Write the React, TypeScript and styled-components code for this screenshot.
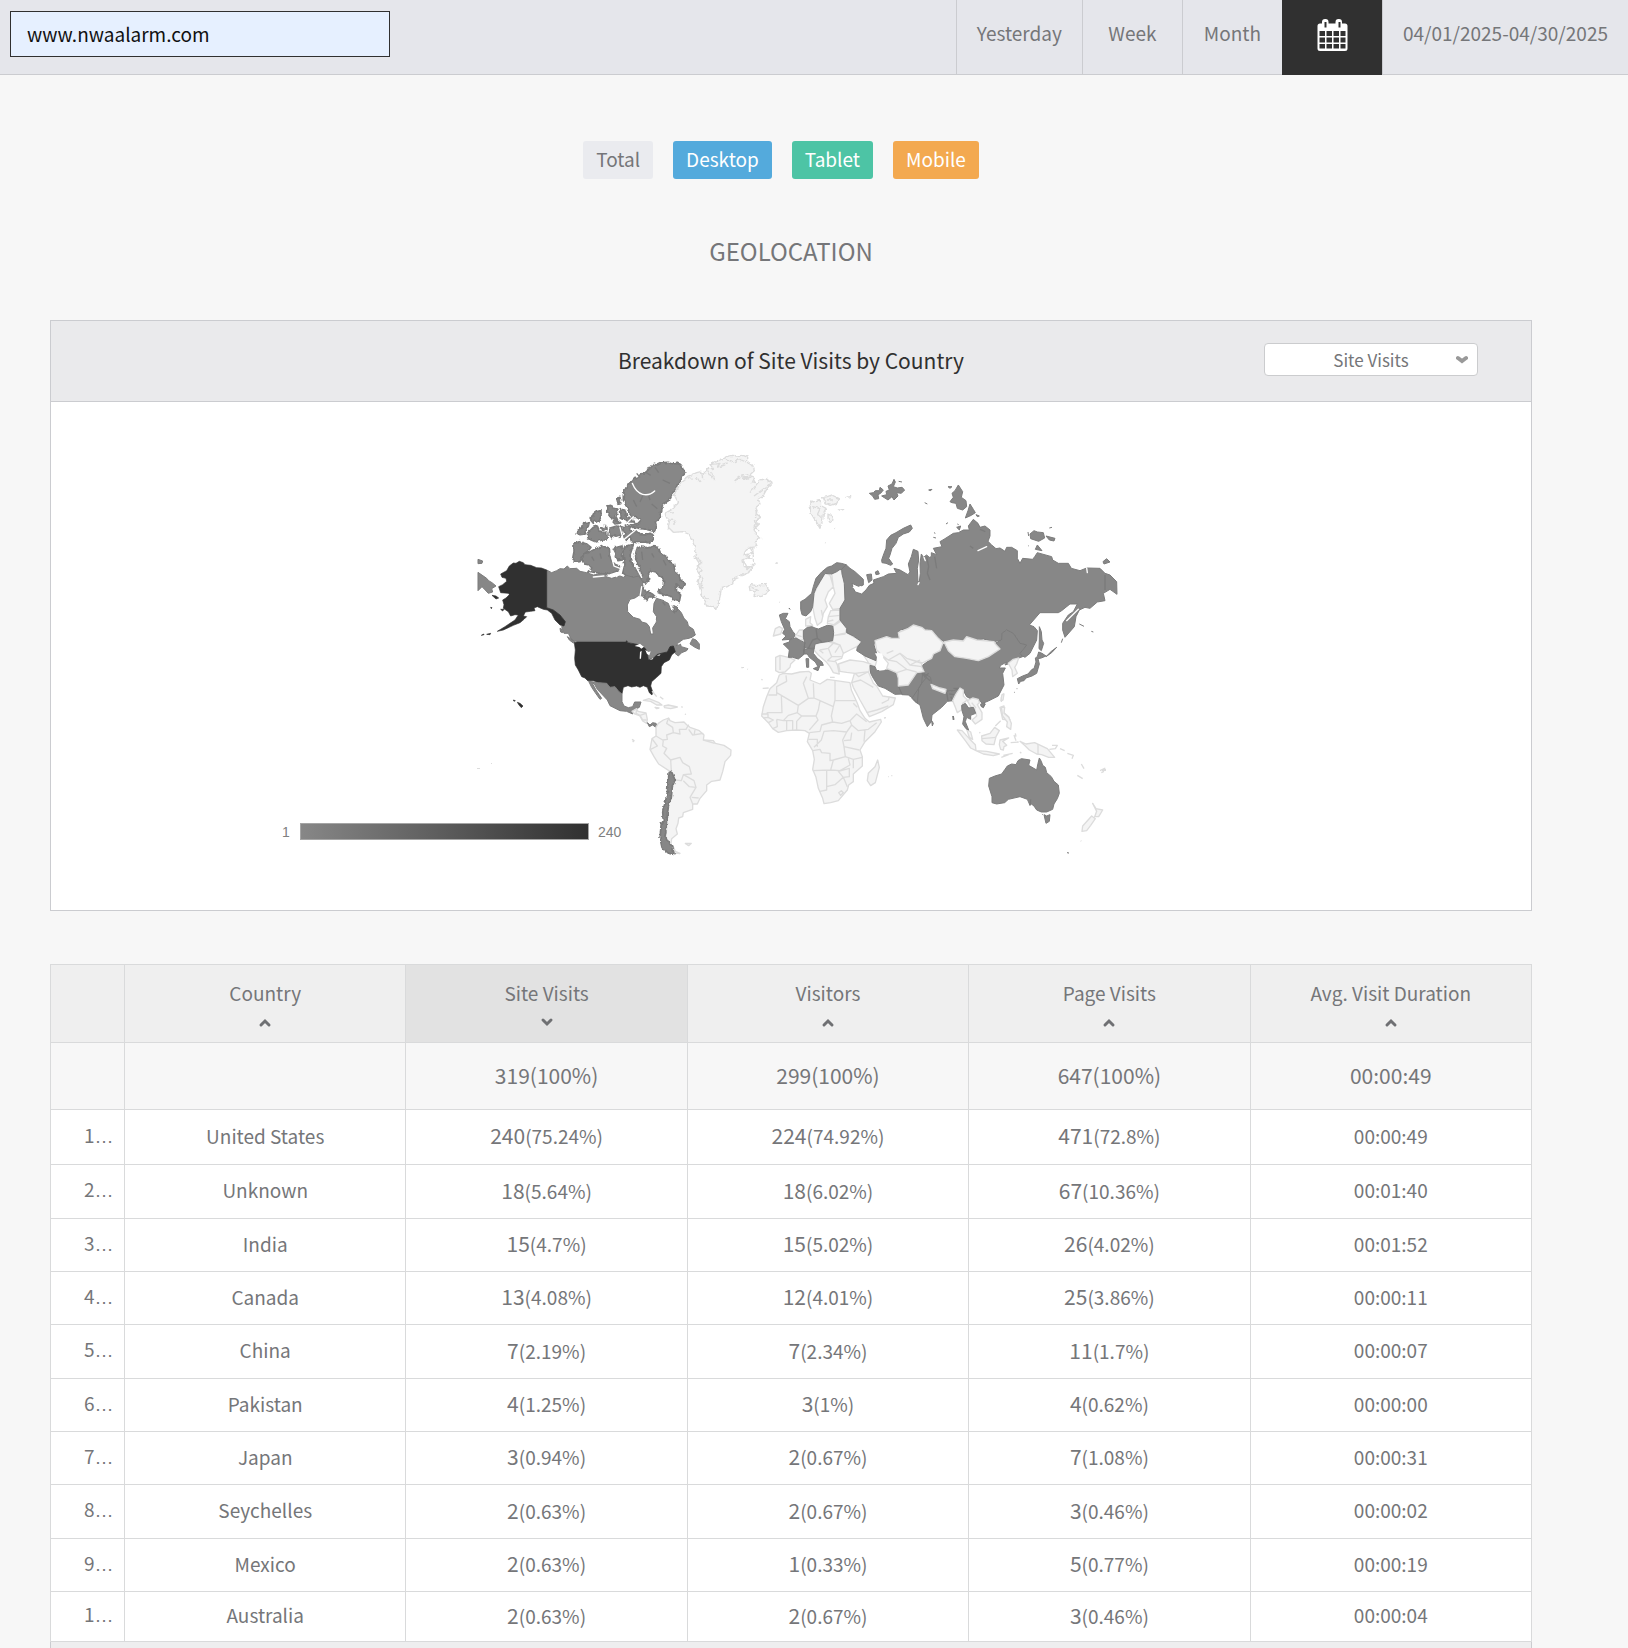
import React from 'react';
import styled, { createGlobalStyle } from 'styled-components';

const GlobalStyle = createGlobalStyle`
  *, *::before, *::after { box-sizing: border-box; }
  body {
    margin: 0;
    background: #f7f7f7;
    color: #757679;
    font-family: "Noto Sans CJK KR", "Noto Sans", sans-serif;
    font-size: 19px;
    line-height: 28px;
  }
  button, input, select { font: inherit; color: inherit; }
`;

const Page = styled.div`
  display: flex;
  flex-direction: column;
  min-height: 100vh;
`;

const TopBar = styled.header`
  display: flex;
  justify-content: space-between;
  height: 75px;
  background: #e5e6eb;
  border-bottom: 1px solid #cbccd0;
`;

const SiteInput = styled.input`
  width: 380px;
  height: 46px;
  margin: 11px 0 0 10px;
  padding: 0 16px 2px;
  border: 1px solid #303030;
  border-radius: 0;
  background: #e6f0ff;
  color: #111;
`;

const RangeNav = styled.nav`
  display: flex;
`;

const RangeButton = styled.button<{ $active?: boolean }>`
  display: flex;
  align-items: center;
  justify-content: center;
  min-width: 100px;
  height: 75px;
  padding: 0 20px ${p => (p.$active ? 6 : 9)}px;
  border: 0;
  border-left: 1px solid ${p => (p.$active ? '#303030' : '#cbccd0')};
  background: ${p => (p.$active ? '#303030' : 'transparent')};
  cursor: pointer;
`;

const Content = styled.main`
  display: flex;
  flex: 1;
  flex-direction: column;
  padding: 66px 96px 0 50px;
`;

const DeviceTabs = styled.div`
  display: flex;
  justify-content: center;
`;

const DeviceTab = styled.button<{ $bg: string; $fg: string }>`
  height: 38px;
  margin-right: 20px;
  padding: 0 13px 2px;
  border: 0;
  border-radius: 3px;
  background: ${p => p.$bg};
  color: ${p => p.$fg};
  cursor: pointer;
`;

const PageTitle = styled.h1`
  margin: 54px 0 51px;
  font-size: 24px;
  font-weight: 400;
  line-height: 36px;
  text-align: center;
`;

const Panel = styled.section`
  border: 1px solid #cbccd0;
  background: #fff;
`;

const PanelHeader = styled.div`
  display: grid;
  grid-template-columns: 1fr auto 1fr;
  align-items: center;
  height: 81px;
  padding-bottom: 3px;
  border-bottom: 1px solid #cbccd0;
  background: #eaeaec;
`;

const PanelTitle = styled.h2`
  grid-column: 2;
  margin: 0;
  color: #303030;
  font-size: 21px;
  font-weight: 400;
`;

const SelectBox = styled.div`
  position: relative;
  justify-self: end;
  width: 214px;
  margin-right: 53px;
`;

const MetricSelect = styled.select`
  display: block;
  width: 100%;
  height: 33px;
  padding: 0 20px;
  border: 1px solid #cbccce;
  border-radius: 4px;
  background: #fff;
  font-size: 17px;
  line-height: 24px;
  text-align: center;
  text-align-last: center;
  appearance: none;
`;

const SelectArrow = styled.svg`
  position: absolute;
  top: 12px;
  right: 10px;
  pointer-events: none;
`;

const MapSvg = styled.svg`
  display: block;
  width: 100%;
  height: 508px;
`;

const MapLabel = styled.text`
  fill: #808080;
  font-family: "Liberation Sans", Arial, sans-serif;
  font-size: 14px;
`;

const Visited = styled.path`
  fill: #878787;
  stroke: #7b7b7b;
  stroke-width: 3;
  stroke-linejoin: round;
`;

const ArcticIslands = styled(Visited)`
  stroke-width: 5;
`;

const TopCountry = styled.path`
  fill: #303030;
  stroke: #303030;
  stroke-width: 2;
  stroke-linejoin: round;
`;

const Unvisited = styled.path`
  fill: #f4f4f4;
  stroke: #dcdcdc;
  stroke-width: 4;
  stroke-linejoin: round;
`;

const Border = styled.path<{ $dark?: boolean }>`
  fill: none;
  stroke: ${p => (p.$dark ? '#7b7b7b' : '#dcdcdc')};
  stroke-width: 4;
  stroke-linejoin: round;
`;

const Water = styled.path`
  fill: #fff;
`;

const Channel = styled.path`
  fill: none;
  stroke: #fff;
  stroke-width: 4;
  stroke-linecap: round;
`;

const DataTable = styled.table`
  width: 100%;
  margin-top: 53px;
  border: 1px solid #d9dadb;
  border-width: 1px 0 0 1px;
  border-collapse: separate;
  border-spacing: 0;
  table-layout: fixed;
  background: #fff;
  text-align: center;

  th, td {
    padding: 0;
    border: 1px solid #d9dadb;
    border-width: 0 1px 1px 0;
    font-weight: 400;
  }

  td {
    padding-bottom: 3px;
  }
`;

const RankCol = styled.col`
  width: 74px;
`;

const HeadCell = styled.th<{ $sorted?: boolean }>`
  height: 78px;
  background: ${p => (p.$sorted ? '#e2e2e2' : '#efefef')};
`;

const SortButton = styled.button`
  display: flex;
  flex-direction: column;
  align-items: center;
  gap: 9px;
  width: 100%;
  height: 77px;
  padding: 14px 0 0;
  border: 0;
  background: transparent;
  cursor: pointer;
`;

const TotalRow = styled.tr`
  height: 67px;
  background: #f7f7f7;
  font-size: 21px;
`;

const DataRow = styled.tr`
  height: 53px;
  &:nth-child(3n) { height: 54px; }
  &:nth-child(2) { height: 55px; }
  &:last-child { height: 50px; }
`;

const RankCell = styled.td`
  && {
    padding-left: 33px;
    text-align: left;
  }
  overflow: hidden;
  white-space: nowrap;
`;

const Ellipsis = styled.span`
  font-family: "Liberation Sans", Arial, sans-serif;
`;

const Count = styled.span`
  font-size: 21px;
`;

const TableFooter = styled.div`
  flex: 1;
  min-height: 6px;
  border-left: 1px solid #cbccd0;
  border-right: 1px solid #cbccd0;
  background: #eeeeef;
`;

const CalendarIcon = () => (
  <svg width="31" height="32" viewBox="0 0 31 32" aria-hidden="true">
    <path
      fill="#fff"
      fillRule="evenodd"
      d="M3 4.500H5V3a3 3 0 0 1 3-3h.5a3 3 0 0 1 3 3v1.500h7V3a3 3 0 0 1 3-3h.5a3 3 0 0 1 3 3v1.500h3a2.500 2.500 0 0 1 2.500 2.500v22.500a2.500 2.500 0 0 1-2.500 2.500H3a2.500 2.500 0 0 1-2.500-2.500V7A2.500 2.500 0 0 1 3 4.500ZM7.500 3v5.500h2V3ZM21.500 3v5.500h2V3ZM2.500 12v5h5.500v-5ZM9.500 12v5H15v-5ZM16.500 12v5H22v-5ZM23.500 12v5h5v-5ZM2.500 18.500v5h5.500v-5ZM9.500 18.500v5H15v-5ZM16.500 18.500v5H22v-5ZM23.500 18.500v5h5v-5ZM2.500 25v4.500h5.500V25ZM9.500 25v4.500H15V25ZM16.500 25v4.500H22V25ZM23.500 25v4.500h5V25Z"
    />
  </svg>
);

const Caret = ({ down }: { down?: boolean }) => (
  <svg width="14" height="14" viewBox="0 0 14 14" aria-hidden="true">
    <path
      d={down ? 'M3 4l4 4 4-4' : 'M3 9l4-4 4 4'}
      fill="none"
      stroke="#6f7073"
      strokeWidth="3"
      strokeLinecap="round"
    />
  </svg>
);

const NorthAmerica = () => (
  <g transform="translate(460 440) scale(0.33333)">
    <ArcticIslands
      filter="url(#coast)"
      d="M515 122L525 112 532 113 540 105 550 98 556 100 562 88 570 86 580 73 592 75 606 68 625 67 640 72 652 70 660 74 664 72 668 86 677 98 668 108 660 125 652 134 645 150 634 163 625 182 612 190 606 200 605 215 598 218 604 230 592 240 586 245 590 262 583 274 560 268 545 266 525 262 512 262 512 255 535 250 542 240 530 232 517 232 508 220 502 205 496 190 490 180 490 165 494 150 500 142 505 135ZM488 265L500 255 512 262 512 272 530 275 540 284 555 285 570 280 580 283 579 300 565 308 545 306 530 308 515 305 510 290 498 304 490 290 495 280ZM470 175L480 172 482 188 474 190ZM442 198L452 196 458 204 470 207 474 222 466 226 472 238 452 232 444 222ZM481 206L495 212 500 230 516 236 524 246 510 254 498 242 484 236ZM448 265L470 258 486 264 485 276 480 292 468 284 455 293 448 282ZM382 280L400 262 412 258 418 272 430 278 440 276 442 300 425 300 408 306 385 296ZM352 280L358 266 368 262 372 248 388 246 385 258 375 272 376 282 360 284ZM392 240L400 222 410 215 423 212 423 228 417 246 405 240 400 250ZM425 262L435 254 438 266 428 272ZM456 242L472 240 482 248 465 252Z"
    />
    <ArcticIslands
      filter="url(#coast)"
      d="M342 310L360 305 380 312 393 322 384 334 370 342 360 365 348 366 338 356 342 335ZM363 352L385 338 400 330 430 318 448 326 450 348 454 362 466 374 478 378 478 390 462 396 450 400 430 402 410 398 386 394 395 380 384 374 372 372ZM460 325L485 318 490 335 484 345 488 360 474 362 466 350 468 340ZM495 318L520 314 515 330 510 345 514 370 530 385 538 400 542 418 520 414 500 412 488 400 495 372 490 350ZM525 330L545 318 560 324 580 320 594 322 602 340 620 350 626 362 640 370 645 395 658 405 660 418 676 432 668 448 655 440 648 432 650 452 662 465 658 485 640 480 634 470 615 465 600 460 592 458 600 446 612 438 614 424 606 412 592 402 588 396 570 392 564 404 566 420 556 432 544 420 545 400 538 380 530 365 526 350ZM548 438L560 455 575 460 588 472 570 470 560 482 550 468ZM640 498L652 502 652 514 640 516Z"
    />
    <Visited d="M260 390L275 398 290 392 300 386 312 387 322 378 330 386 350 385 360 394 380 398 400 405 430 400 438 410 455 415 480 408 490 412 500 406 520 412 536 408 548 425 548 445 560 460 552 468 535 467 525 474 510 478 502 495 503 515 520 532 540 538 545 546 560 550 568 560 572 582 580 582 578 564 588 548 590 530 580 515 582 490 590 475 606 478 615 485 625 490 632 510 645 520 655 508 664 518 672 535 682 545 685 558 700 568 706 585 692 594 670 598 655 608 648 618 660 608 664 620 684 626 680 632 665 638 655 648 645 640 640 618 630 620 622 636 612 638 592 643 580 655 565 660 562 640 558 628 530 613 504 606 498 604 350 604 335 600 325 580 312 580 305 560 316 545 300 525 280 510 260 503ZM690 612L698 596 708 600 718 612 718 628 705 622ZM322 590L332 596 346 606 340 609 328 600ZM300 565L306 568 308 578 302 576Z" />
    <Water
      filter="url(#coast)"
      d="M570 392L580 398 584 412 600 415 610 428 604 442 590 450 578 460 564 450 562 436 576 424ZM575 538L582 538 586 546 578 552Z"
    />
    <Channel d="M517 130Q528 158 548 163T584 153M365 372L392 392M400 411L432 408M452 340L462 378 482 386 470 410M528 320Q516 350 528 380L545 412M585 470L612 478 635 490 656 492M520 230L500 250 520 250M410 250L432 262 440 240M480 262L490 300 524 272M545 440L540 470M655 612L690 598 680 616" />
    <Border $dark d="M530 100L540 112M556 96L572 106M585 82L596 98M548 168L540 186M566 168L570 180M608 120L630 130M575 192L592 206M520 180L530 200M545 335L548 360M575 340L582 352M610 360L618 376M420 340L424 356M395 350L402 362M608 486L616 496" />
    <TopCountry d="M260 390L244 384 230 383 212 376 195 374 190 368 178 364 168 370 160 369 148 378 140 392 122 402 126 412 138 415 140 424 128 434 116 440 120 452 122 458 145 460 148 464 138 474 128 480 132 494 130 505 145 515 152 528 165 524 175 525 165 540 150 550 135 560 112 574 130 570 160 556 180 548 192 538 200 530 190 528 196 516 212 514 225 512 222 504 232 500 250 508 262 510 275 520 285 540 300 555 312 558 316 545 300 525 280 510 260 503ZM96 466L108 468 116 474 108 477ZM122 508L132 508 128 513ZM92 502L96 503 94 506ZM64 586L72 582 72 584ZM80 583L92 580 90 584ZM160 780L166 782 162 784ZM172 787L180 790 189 798 184 803 177 795Z" />
    <TopCountry d="M343 608L350 606 498 606 500 602 504 608 530 613 545 616 558 628 562 640 565 660 580 655 592 643 612 638 622 636 630 620 640 618 646 635 635 645 628 660 612 668 604 680 603 700 590 712 575 725 572 738 578 755 576 765 568 758 562 742 550 737 540 742 530 738 515 741 504 737 490 742 486 762 476 756 465 740 450 742 440 730 415 728 400 722 383 722 375 714 365 710 355 690 346 675 344 655 346 630Z" />
    <Water d="M524 618L540 611 552 620 544 626 538 621ZM540 636L545 632 543 656 539 656ZM556 630L566 636 572 634 568 646 561 642ZM568 660L580 653 578 658ZM590 646L602 643 598 647Z" />
    <Visited d="M386 724L415 728 440 730 450 742 465 740 476 754 486 762 486 785 492 798 505 803 518 800 524 786 543 786 538 802 530 806 517 812 518 822 500 814 480 812 450 797 442 780 428 765 412 748 402 730 398 732 408 750 425 775 420 778 405 757 395 742Z" />
    <Unvisited d="M516 814L530 806 534 814 558 819 562 838 560 850 548 843 540 828 524 822ZM550 781L567 776 597 788 606 795 590 795 572 784ZM612 798L625 795 652 801 632 806 614 803ZM585 802L597 804 590 806Z" />
    <Border d="M530 808L528 820 540 826 558 820M540 826L548 840 560 840M576 754L582 760 590 770M600 770L610 778M664 800L668 802M676 822L677 824" />
    <Visited d="M562 848L570 855 578 848 588 850 592 856 586 861 578 855 568 860Z" />
    <Visited d="M54 397L80 415 86 422 96 428 108 438 95 446 98 456 85 460 70 444 66 440 54 452ZM54 358L68 363 66 370 54 371Z" />
  </g>
);

const Greenland = () => (
  <g transform="translate(620 440) scale(0.33333)" filter="url(#coast)">
    <Unvisited d="M168 150L178 145 180 130 195 120 198 112 215 105 230 98 243 95 252 102 262 85 280 86 270 74 285 66 300 60 320 50 335 46 350 48 370 46 383 52 383 65 398 76 403 92 390 104 365 108 345 122 368 114 380 118 395 108 404 112 398 125 412 130 425 118 440 117 456 130 444 142 436 155 428 170 415 178 420 192 405 205 410 222 422 232 405 242 415 255 402 268 408 285 422 294 404 302 412 320 395 322 378 328 372 345 390 350 366 360 370 380 398 380 386 398 362 408 345 412 338 428 322 440 304 446 300 470 290 508 275 500 262 498 252 480 245 462 238 440 234 425 242 408 230 390 238 370 225 350 228 330 218 305 205 282 188 275 160 277 145 262 148 245 135 220 160 206 165 195 176 188 168 175 162 162ZM388 440L398 434 410 438 425 434 438 433 446 448 438 462 420 470 402 466 406 456 390 452ZM468 370L472 368Z" />
    <Border d="M205 112L218 118M228 108L240 126M245 92L248 118M262 90L278 116M275 96L284 120M270 74L300 70 290 82 320 72M320 60L340 66 360 58 378 66M345 122L360 108M368 114L396 110M412 130L390 158M440 140L402 168M143 240L168 242 160 254M150 220L162 218M412 208L406 232M416 235L402 262 418 270M390 320L398 340 376 345 400 360M398 322L402 380M370 362L384 386 400 372M228 352L248 368 232 376 246 392 234 400M236 408L250 418 240 432 250 445M252 468L266 480M395 442L412 450 404 456" />
  </g>
);

const Eurasia = () => (
  <g transform="translate(740 440) scale(0.33333)">
    <g filter="url(#coast)">
      <Unvisited d="M210 182L220 186 232 180 244 182 245 198 258 205 250 220 248 240 240 265 232 250 225 240 212 218ZM248 172L262 170 275 165 298 176 290 190 270 196 255 188ZM264 222L276 226 282 240 272 246 264 236ZM298 210L312 208ZM318 172L332 170Z" />
      <Border d="M218 200L240 206 232 224 245 230M258 180L280 180M286 265L288 266" />
    </g>
    <Border d="M255 308L257 309M110 370L113 368M118 486L120 487M4 682L8 684M22 687L24 688M64 718L68 720M68 745L86 744" />
    <Visited d="M388 160L400 158 406 152 418 152 420 142 430 150 422 160 414 164 416 176 404 178 398 168ZM425 168L440 164 438 154 448 150 444 138 456 132 462 118 466 126 460 140 472 144 486 142 494 150 484 160 470 158 474 168 462 180 456 170 444 180ZM476 124L486 126M566 150L576 148 572 152ZM554 188L562 192M624 140L636 140 630 145ZM630 185L640 172 636 160 645 152 655 135 668 155 664 172 678 182 680 200 668 210 652 205 648 190 636 188ZM676 234L684 212 690 192 700 208 706 218 694 226ZM708 224L718 228 712 230ZM618 252L624 248M650 262L662 258 658 270ZM582 278L586 280M580 292L588 294M652 252L656 254" />
    <Visited d="M425 360L432 340 438 325 440 300 452 286 468 278 490 265 512 255 517 265 508 276 490 282 475 292 468 310 456 325 450 345 446 355 458 372 452 376 438 370 426 368ZM380 404L394 402 396 420 386 428ZM406 396L414 392 418 402 408 404Z" />
    <Unvisited d="M218 500L222 460 240 425 255 400 270 405 280 440 265 455 255 480 262 500 250 520 245 545 232 556 225 535ZM275 402L290 395 300 388 310 400 313 430 315 480 300 505 278 508 268 490 285 460 280 440ZM272 512L300 510 300 545 285 555 262 550 265 530ZM280 555L300 540 320 565 315 582 280 587ZM280 587L320 578 365 605 350 620 330 630 310 640 300 615 275 605ZM197 558L197 538 212 530 210 548 218 556ZM165 590L178 570 192 570 190 600 178 600ZM225 612L262 605 300 615 310 640 305 655 286 662 292 675 298 702 280 698 270 680 258 665 235 645 222 630ZM100 588L106 566 118 560 128 566 122 582ZM107 652L120 646 145 652 165 660 152 672 150 682 135 696 118 698 107 692ZM295 672L330 660 370 665 392 672 387 695 345 700 320 697 300 694ZM370 645L410 663 405 680 388 672Z" />
    <Border d="M265 530L300 526M240 630L265 625 275 650 262 662M265 625L280 610M250 640L238 630M275 650L305 650M285 638L300 615M262 662L285 665M120 648L120 690M280 540L262 545M185 590L172 586M244 510L248 530M270 712L284 712" />
    <Visited d="M182 485L195 478 215 460 220 440 228 415 245 396 262 382 275 378 290 368 304 370 318 374 316 390 300 388 290 395 275 402 255 400 240 425 228 445 222 460 218 500 212 515 198 528 186 524 182 508ZM190 572L202 562 216 560 225 564 235 567 262 556 278 558 281 578 278 602 262 605 240 608 225 612 222 628 205 625 192 622 195 608 190 592ZM130 612L148 606 150 598 168 594 182 602 195 608 192 628 190 645 175 657 158 652 145 652 148 630ZM190 630L205 625 222 624 220 640 232 655 246 666 250 676 240 676 234 692 220 686 234 680 226 666 208 652 202 642 192 642ZM198 656L206 656 206 682 200 682ZM118 525L130 520 144 520 136 536 148 545 150 560 158 574 165 582 162 592 150 598 126 600 138 588 128 580 134 568 124 545ZM147 504L150 508Z" />
    <Border $dark d="M228 566L232 595 245 605M232 595L218 600 205 625M190 645L195 620" />
    <Visited d="M318 374L330 385 345 395 370 418 370 435 358 440 336 430 340 445 346 456 365 462 378 450 388 436 402 430 400 420 430 410 445 402 470 400 462 385 480 390 504 404 510 396 505 372 514 350 520 328 534 334 536 360 532 385 534 426 538 424 541 400 540 370 544 342 550 352 560 345 568 352 574 350 574 338 590 344 580 325 606 320 600 305 615 296 640 280 655 278 670 270 688 270 685 258 700 238 714 250 720 262 735 258 750 270 750 288 744 304 755 315 768 326 780 324 795 334 800 322 815 322 832 332 832 355 840 370 848 355 878 358 884 350 892 338 935 350 938 360 955 370 985 370 994 385 1020 392 1040 384 1080 385 1095 400 1110 405 1130 425 1131 463 1110 448 1090 460 1095 482 1072 486 1050 505 1035 502 1018 510 1008 530 1003 560 975 592 968 570 968 550 985 525 1000 515 1012 492 990 492 965 512 955 518 900 518 868 555 882 560 892 572 890 600 870 640 855 652 842 645 840 640 860 615 840 610 820 580 800 570 786 580 785 600 762 605 730 597 710 600 680 590 670 603 640 600 612 605 595 595 580 575 570 568 555 570 545 560 520 555 505 565 480 570 475 578 478 595 455 595 440 588 405 600 402 615 410 640 408 662 375 648 350 632 352 622 365 605 340 588 320 578 320 565 300 540 300 505 315 480 313 430 306 402 305 388Z" />
    <Border $dark d="M560 350L566 380 562 400 570 420M584 350L590 385M720 268L736 275" />
    <Channel d="M537 428L534 434M552 352L556 362M714 332L740 320M340 442L352 444 362 440" />
    <Visited d="M545 678L575 655 580 642 600 632 608 612 620 615 625 632 645 650 680 655 715 662 745 650 780 628 765 610 785 600 786 580 800 570 820 580 840 610 860 615 840 640 848 650 830 656 815 668 795 675 800 666 782 676 778 684 796 684 788 700 792 735 775 768 745 783 728 790 712 778 695 778 680 770 668 748 640 752 620 752 575 738 556 708 545 690ZM722 796L736 792 730 803Z" />
    <Visited d="M390 676L405 680 410 692 440 690 455 688 470 698 475 715 475 738 486 762 465 763 435 745 415 738 400 715 392 700ZM475 738L500 735 520 712 530 698 548 696 560 712 545 730 536 745 532 790 520 776 505 765 486 764ZM548 698L572 712 575 738 620 755 640 752 660 745 664 750 650 765 640 782 622 784 605 802 576 825 574 845 562 860 550 835 540 795 525 785 516 775 536 745 545 730ZM575 842L580 850 577 858Z" />
    <Border $dark d="M620 758L624 782M628 762L642 764M640 745L660 745M632 770L640 785M545 700L570 722M552 712L566 700M690 318L700 325" />
    <Unvisited d="M612 606L640 600 670 603 680 590 710 600 762 605 766 612 780 627 745 650 715 662 680 655 645 650 625 632ZM405 602L440 590 455 595 478 595 475 578 505 565 520 555 545 562 555 570 575 572 595 595 609 608 600 632 580 642 575 655 545 670 500 655 480 640 445 660 425 645 410 630ZM430 652L445 660 480 640 500 655 545 668 545 680 552 695 530 698 505 735 475 738 475 715 470 698 440 685 445 670ZM573 733L600 744 618 748 615 760 578 746Z" />
    <Border d="M445 660L470 665 500 688 530 696M480 640L510 675 545 680M510 675L540 660M470 698L500 688M440 640L460 632" />
    <Water d="M405 640L425 640 430 650 425 665 435 690 418 692 412 678 418 665Z" />
  </g>
);

const EastAsia = () => (
  <g transform="translate(900 460) scale(0.33333)">
    <Unvisited d="M325 610L340 598 356 594 350 612 344 622 352 640 338 650 336 630ZM304 712L310 702 308 718 304 724ZM300 742L312 738 312 758 326 770 330 780 308 778Z" />
    <Visited d="M416 576L426 580 438 588 424 594 414 596 418 612 410 640 396 648 378 654 372 662 362 664 356 672 352 656 368 648 384 642 396 628 402 626 408 606 406 594 412 590ZM418 500L424 515 426 540 431 550 424 572 417 566 418 540ZM438 590L455 578 470 562 454 574ZM484 548L488 536M384 216L386 228M390 222L402 212 412 216 430 218 434 234 416 244 392 236ZM438 228L465 235 462 243 448 240ZM406 268L412 255 426 272ZM609 305L620 296 630 306 612 312ZM448 204L456 202M384 256L386 258M538 492L552 499M574 514L580 516M342 697L344 697M350 686L352 686M158 768L160 780" />
    <Border $dark d="M615 345L615 390" />
    <Channel d="M535 448L500 482M560 324L562 338" />
  </g>
);

const SouthAmericaAndAfrica = () => (
  <g transform="translate(620 690) scale(0.33333)">
    <Unvisited d="M108 112L115 100 130 90 146 84 150 92 165 98 192 96 200 104 210 112 238 122 252 135 250 150 280 152 286 160 312 166 333 180 332 196 315 215 308 245 300 270 275 274 260 285 260 302 240 325 232 342 218 342 218 358 190 368 188 380 176 384 174 400 168 416 172 432 155 446 152 468 138 440 145 350 158 270 150 244 116 222 102 200 90 178 96 146 108 138ZM160 470L166 484 180 490 162 490ZM196 460L214 460 206 467Z" />
    <Border d="M146 84L140 100 158 112 160 128 140 135 142 148 128 150 108 138M160 128L180 132 178 118 198 118 206 104M206 118L218 135 250 130M225 120L222 136M130 150L128 168 140 175 132 190 152 210 154 244M152 210L180 202 188 218 208 230 214 252 190 254 184 272 165 270M190 254L205 262 222 272 228 292 208 290 190 272M228 292L210 322 218 342M215 322L236 324M96 146L112 168 92 178M250 150L284 160" />
    <ArcticIslands
      filter="url(#coast)"
      d="M148 244L156 248 165 270 157 290 154 322 146 342 142 370 142 400 138 420 135 440 146 460 158 468 162 494 140 488 126 472 120 446 122 420 124 402 130 392 128 365 136 335 142 310 144 280Z"
    />
    <Border d="M36 148L42 152 38 156M195 72L197 73M176 492L180 490M804 260L806 260M814 257L817 257M792 84L798 83" />
    <Unvisited d="M440 20L450 -4 470 -22 478 -45 490 -50 515 -48 540 -54 566 -56 574 -50 570 -30 600 -18 622 -32 690 -22 694 0 712 40 720 62 735 85 748 96 782 88 784 96 765 125 735 155 720 180 727 200 727 228 700 252 700 275 686 285 682 300 655 332 632 338 612 341 608 325 595 295 588 262 578 238 583 208 578 182 562 155 568 130 555 122 530 120 500 122 475 127 458 116 445 98 425 78 430 50ZM745 250L765 230 773 210 778 232 766 278 752 287 742 272Z" />
    <Border d="M445 15L470 15 470 -10 500 -26 498 -44M470 8L484 16 486 68 440 68M484 16L535 46 565 25 550 -20 560 -40M535 46L532 68 505 76 490 92 470 88M565 25L582 24 580 -20M582 24L600 32 640 50 645 30M645 -28L645 32 708 32M600 32L595 60 588 78 545 78 532 68M545 78L530 94 530 120M588 78L594 90 575 112 568 120M640 50L634 78 638 96 605 105 600 124 568 128M638 96L665 100 690 92 695 105 680 126 640 122 612 124 604 150 582 172M690 92L710 72 740 95M695 105L715 122 745 118 770 98M735 120L732 155M680 126L668 150 672 170 718 180M695 128L692 150 672 152M672 170L676 200 640 210 630 212 630 190 605 188 600 178 578 182M676 200L700 208 727 202M640 210L632 240 578 242M632 240L660 242 690 225 685 205M620 243L620 268 620 300 600 304M620 290L645 284 670 262 655 244 688 235 688 260 670 262M670 262L682 290M656 308L664 302 670 308 662 316ZM470 88L472 110 458 116M486 92L500 92 500 122M500 92L518 92 518 120M425 72L444 72 444 82 430 84M444 82L460 90 445 98M565 148L592 148 592 170M700 208L700 235M700 40L712 52" />
    <Unvisited d="M704 -52L745 -55 760 -20 770 -12 788 18 826 24 820 44 785 65 748 80 738 62 720 30 700 -8 695 -22Z" />
    <Border d="M695 -22L722 -30 760 -8M704 -52L716 -40 745 -55M740 68L770 60 805 48M785 40L805 30 808 20" />
  </g>
);

const Oceania = () => (
  <g transform="translate(940 680) scale(0.33333)">
    <Unvisited d="M38 62L48 42 60 24 70 30 70 48 82 60 68 70 64 90 52 98 46 82ZM82 62L98 54 115 58 118 68 112 74 126 98 126 118 106 132 96 120 110 108 104 86 92 80ZM183 62L186 44 192 42 189 60ZM184 82L194 82 192 100 206 112 214 130 212 148 200 140 202 126 188 108ZM52 150L66 152 88 176 106 194 108 212 92 204 76 182ZM80 148L92 156 98 178 88 172ZM108 212L140 214 178 222 160 227 130 222ZM125 168L150 160 164 142 178 152 168 170 162 194 138 192 126 182ZM180 180L206 174 188 184 200 196 192 200 190 210 182 208 178 194ZM240 184L258 192 284 188 322 206 344 232 326 232 305 224 290 222 268 210 256 198ZM458 370L468 386 488 390 476 410 464 410 470 394ZM455 408L466 416 452 436 440 452 426 454 428 438Z" />
    <Border d="M294 192L294 224M126 176L168 172M95 68L108 84M166 138L182 122M190 226L218 220M184 232L206 224M118 157L121 159M222 165L228 182M212 188L236 186M226 160L228 170M336 196L352 196 346 206 328 208M360 206L374 212M382 220L400 226 396 236M424 252L432 266M412 286L428 296M480 272L496 264M484 278L492 274M422 482L424 484M240 216L244 220" />
    <Visited d="M65 76L76 70 86 84 100 82 107 100 92 106 92 118 80 112 76 125 86 150 78 146 68 132 72 110 66 92ZM122 72L134 68 130 82 124 80ZM40 108L42 118 40 120Z" />
    <Visited d="M148 295L165 288 185 282 195 268 202 258 215 252 228 254 234 242 244 236 270 240 266 256 290 270 294 250 298 234 304 244 308 256 316 262 320 278 334 290 342 304 355 315 358 340 352 356 342 372 338 388 320 396 304 396 290 390 282 378 274 372 270 376 262 358 240 350 205 358 194 368 170 372 156 368 156 350 146 318ZM312 404L320 408 330 404 328 424 318 430ZM306 402L308 404M382 518L386 519Z" />
    <Border d="M270 376L272 358" $dark />
  </g>
);

const WorldMap = () => (
  <MapSvg viewBox="51 402 1480 508" role="img" aria-label="Site visits by country">
    <defs>
      <linearGradient id="scale">
        <stop offset="0" stopColor="#878787" />
        <stop offset="1" stopColor="#303030" />
      </linearGradient>
      <filter id="coast" colorInterpolationFilters="sRGB">
        <feTurbulence type="fractalNoise" baseFrequency="0.08" numOctaves="2" seed="4" />
        <feDisplacementMap in="SourceGraphic" scale="12" xChannelSelector="R" yChannelSelector="G" />
      </filter>
    </defs>
    <NorthAmerica />
    <Greenland />
    <SouthAmericaAndAfrica />
    <Eurasia />
    <EastAsia />
    <Oceania />
    <g fill="#dcdcdc">
      <rect x="477" y="768" width="3" height="1" />
      <rect x="491" y="763" width="1" height="1" />
      <rect x="1102" y="769" width="4" height="2" />
      <rect x="742" y="667" width="2" height="1" />
    </g>
    <MapLabel x="282" y="837">1</MapLabel>
    <rect x="300.500" y="823.500" width="288" height="16" fill="url(#scale)" stroke="#a5a5a5" />
    <MapLabel x="598" y="837">240</MapLabel>
  </MapSvg>
);

const devices = [
  { name: 'Total', bg: '#eaebef', fg: '#757679' },
  { name: 'Desktop', bg: '#54aadc', fg: '#fff' },
  { name: 'Tablet', bg: '#4dc4a5', fg: '#fff' },
  { name: 'Mobile', bg: '#f3a950', fg: '#fff' },
];

const columns = ['Country', 'Site Visits', 'Visitors', 'Page Visits', 'Avg. Visit Duration'];

type Metric = [string, string];
const rows: [string, string, Metric, Metric, Metric, string][] = [
  ['1', 'United States', ['240', '75.24%'], ['224', '74.92%'], ['471', '72.8%'], '00:00:49'],
  ['2', 'Unknown', ['18', '5.64%'], ['18', '6.02%'], ['67', '10.36%'], '00:01:40'],
  ['3', 'India', ['15', '4.7%'], ['15', '5.02%'], ['26', '4.02%'], '00:01:52'],
  ['4', 'Canada', ['13', '4.08%'], ['12', '4.01%'], ['25', '3.86%'], '00:00:11'],
  ['5', 'China', ['7', '2.19%'], ['7', '2.34%'], ['11', '1.7%'], '00:00:07'],
  ['6', 'Pakistan', ['4', '1.25%'], ['3', '1%'], ['4', '0.62%'], '00:00:00'],
  ['7', 'Japan', ['3', '0.94%'], ['2', '0.67%'], ['7', '1.08%'], '00:00:31'],
  ['8', 'Seychelles', ['2', '0.63%'], ['2', '0.67%'], ['3', '0.46%'], '00:00:02'],
  ['9', 'Mexico', ['2', '0.63%'], ['1', '0.33%'], ['5', '0.77%'], '00:00:19'],
  ['1', 'Australia', ['2', '0.63%'], ['2', '0.67%'], ['3', '0.46%'], '00:00:04'],
];

const MetricCell = ({ value }: { value: Metric }) => (
  <td>
    <Count>{value[0]}</Count>({value[1]})
  </td>
);

export default function App() {
  return (
    <Page>
      <GlobalStyle />
      <TopBar>
        <SiteInput type="text" aria-label="Site" defaultValue="www.nwaalarm.com" />
        <RangeNav aria-label="Date range">
          <RangeButton>Yesterday</RangeButton>
          <RangeButton>Week</RangeButton>
          <RangeButton>Month</RangeButton>
          <RangeButton $active aria-label="Pick dates">
            <CalendarIcon />
          </RangeButton>
          <RangeButton>04/01/2025-04/30/2025</RangeButton>
        </RangeNav>
      </TopBar>
      <Content>
        <DeviceTabs>
          {devices.map(d => (
            <DeviceTab key={d.name} $bg={d.bg} $fg={d.fg}>
              {d.name}
            </DeviceTab>
          ))}
        </DeviceTabs>
        <PageTitle>GEOLOCATION</PageTitle>
        <Panel>
          <PanelHeader>
            <PanelTitle>Breakdown of Site Visits by Country</PanelTitle>
            <SelectBox>
              <MetricSelect aria-label="Metric" defaultValue="Site Visits">
                <option>Site Visits</option>
                <option>Visitors</option>
                <option>Page Visits</option>
              </MetricSelect>
              <SelectArrow width="12" height="10" viewBox="0 0 12 10" aria-hidden="true">
                <path d="M2 3l4 3 4-3" fill="none" stroke="#999" strokeWidth="4" strokeLinecap="round" />
              </SelectArrow>
            </SelectBox>
          </PanelHeader>
          <WorldMap />
        </Panel>
        <DataTable>
          <colgroup>
            <RankCol />
            {columns.map(c => (
              <col key={c} />
            ))}
          </colgroup>
          <thead>
            <tr>
              <HeadCell />
              {columns.map(c => (
                <HeadCell key={c} $sorted={c === 'Site Visits'}>
                  <SortButton>
                    {c}
                    <Caret down={c === 'Site Visits'} />
                  </SortButton>
                </HeadCell>
              ))}
            </tr>
          </thead>
          <tbody>
            <TotalRow>
              <td />
              <td />
              <td>319(100%)</td>
              <td>299(100%)</td>
              <td>647(100%)</td>
              <td>00:00:49</td>
            </TotalRow>
            {rows.map(([rank, country, visits, visitors, pages, duration]) => (
              <DataRow key={country}>
                <RankCell>
                  {rank}
                  <Ellipsis>…</Ellipsis>
                </RankCell>
                <td>{country}</td>
                <MetricCell value={visits} />
                <MetricCell value={visitors} />
                <MetricCell value={pages} />
                <td>{duration}</td>
              </DataRow>
            ))}
          </tbody>
        </DataTable>
        <TableFooter />
      </Content>
    </Page>
  );
}
